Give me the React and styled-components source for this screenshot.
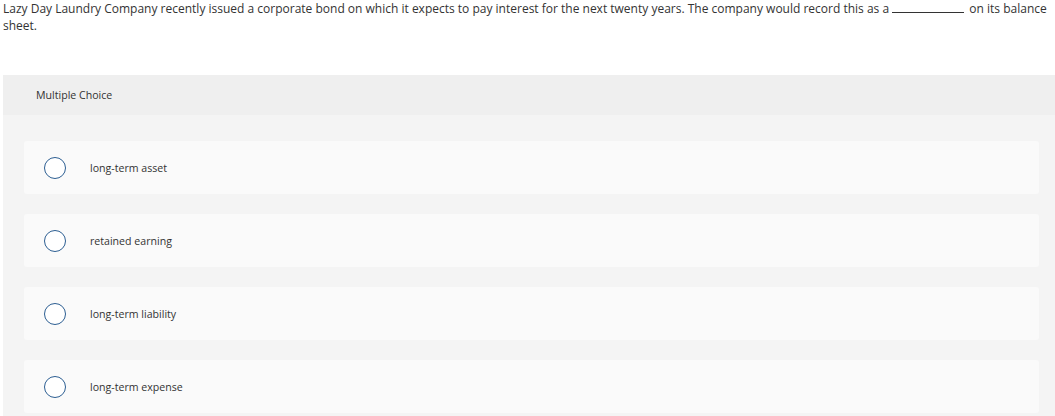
import React from "react";
import styled, { createGlobalStyle } from "styled-components";

const Global = createGlobalStyle`
  html, body { margin: 0; padding: 0; background: #fff; }
  body { font-family: "Open Sans", "Liberation Sans", Arial, sans-serif; color: #333; }
`;

const Page = styled.div`
  padding: 0 0 0 3px;
`;

const Question = styled.p`
  margin: 0;
  font-size: 12px;
  line-height: 17px;
  color: #333;
  padding-right: 4px;
`;

const Blank = styled.span`
  display: inline-block;
  width: 72px;
  border-bottom: 1px solid #333;
  margin: 0 2px 0 0;
  vertical-align: baseline;
  height: 9px;
`;

const Panel = styled.section`
  margin-top: 41px;
  background: #f4f4f4;
`;

const PanelHeader = styled.div`
  height: 40px;
  background: #efefef;
  display: flex;
  align-items: center;
  padding-left: 33px;
  font-size: 10.6px;
  color: #333;
`;

const Choices = styled.ul`
  list-style: none;
  margin: 0;
  padding: 26px 16px 4px 21px;
  display: flex;
  flex-direction: column;
  gap: 20px;
`;

const Choice = styled.li`
  height: 53px;
  background: #fafafa;
  border-radius: 3px;
  display: flex;
  align-items: center;
  padding-left: 20px;
`;

const Radio = styled.span`
  width: 20px;
  height: 20px;
  border: 1.5px solid #2c5e92;
  border-radius: 50%;
  background: #fff;
  flex: none;
`;

const Label = styled.span`
  margin-left: 24px;
  font-size: 10.6px;
  color: #333;
`;

const options = ["long-term asset", "retained earning", "long-term liability", "long-term expense"];

export default function App() {
  return (
    <>
      <Global />
      <Page>
        <Question>
          Lazy Day Laundry Company recently issued a corporate bond on which it expects to pay interest for the next twenty years. The company would record this as a{" "}
          <Blank /> on its balance sheet.
        </Question>
        <Panel>
          <PanelHeader>Multiple Choice</PanelHeader>
          <Choices>
            {options.map((o) => (
              <Choice key={o}>
                <Radio />
                <Label>{o}</Label>
              </Choice>
            ))}
          </Choices>
        </Panel>
      </Page>
    </>
  );
}
